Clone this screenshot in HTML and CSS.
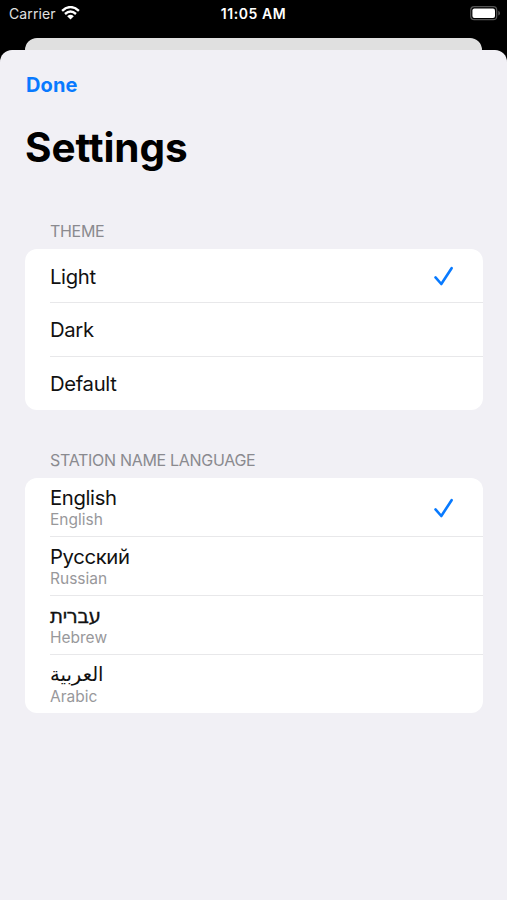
FILE: index.html
```html
<!DOCTYPE html>
<html lang="en">
<head>
<meta charset="utf-8">
<title>Settings</title>
<link rel="stylesheet" href="styles.css">
</head>
<body>
<header class="status">
  <div class="carrier"><span>Carrier</span>
    <svg class="wifi" width="19" height="14" viewBox="0 0 19 14"><path d="M1.1 4.9Q9.5-2.7 17.9 4.9M4 8Q9.5 3.1 15 8" fill="none" stroke="#fff" stroke-width="2.4"/><path d="M6.2 10.2Q9.5 7.3 12.8 10.2L9.5 13.5Z" fill="#fff"/></svg>
  </div>
  <div class="time">11:05 AM</div>
  <svg class="battery" width="31" height="15" viewBox="0 0 31 15"><rect x=".7" y=".7" width="26" height="13" rx="3.5" fill="none" stroke="#555" stroke-width="1.2"/><rect x="2.4" y="2.4" width="22.6" height="9.6" rx="2" fill="#fff"/><path d="M28.3 4.8Q30 5.6 30 7.2T28.3 9.6Z" fill="#555"/></svg>
</header>
<div class="behind"></div>
<main class="sheet">
  <a class="done">Done</a>
  <h1>Settings</h1>
  <section class="theme">
    <h2>THEME</h2>
    <ul class="card">
      <li><span class="name">Light</span><svg class="check" width="20" height="20" viewBox="0 0 20 20"><path d="M1.5 11.4L7.3 18L17.6 2.2"/></svg></li>
      <li><span class="name">Dark</span></li>
      <li><span class="name">Default</span></li>
    </ul>
  </section>
  <section class="language">
    <h2>STATION NAME LANGUAGE</h2>
    <ul class="card">
      <li><div><div class="name">English</div><div class="sub">English</div></div><svg class="check" width="20" height="20" viewBox="0 0 20 20"><path d="M1.5 11.4L7.3 18L17.6 2.2"/></svg></li>
      <li><div><div class="name" lang="ru">Русский</div><div class="sub">Russian</div></div></li>
      <li><div><div class="name hebrew" lang="he">עברית</div><div class="sub">Hebrew</div></div></li>
      <li><div><div class="name arabic" lang="ar">العربية</div><div class="sub">Arabic</div></div></li>
    </ul>
  </section>
</main>
</body>
</html>
```
FILE: styles.css
```css
* { box-sizing: border-box; }
body { margin: 0; height: 900px; overflow: hidden; background: #000; font-family: Inter, "Liberation Sans", sans-serif; display: flex; flex-direction: column; }
.status { height: 38px; flex: none; display: grid; grid-template-columns: 1fr auto 1fr; align-items: start; padding: 6px 6px 0 9px; color: #fff; }
.carrier { display: flex; gap: 5px; font-size: 14px; line-height: 16px; letter-spacing: .1px; color: #e0e0e0; }
.time { font-size: 14px; line-height: 16px; font-weight: 600; letter-spacing: .55px; margin-left: -3px; }
.battery { justify-self: end; }
.behind { height: 12px; flex: none; margin: 0 25px; background: #e0e0e0; border-radius: 12px 12px 0 0; }
.sheet { flex: 1; background: #f1f0f5; border-radius: 12px 12px 0 0; padding: 22px 24px 0 25px; }
.done { display: block; padding-left: 1px; font-size: 20px; line-height: 26px; font-weight: 650; letter-spacing: .1px; color: #087aff; }
h1 { margin: 25px 0 0; font-size: 40.5px; line-height: 50px; font-weight: 700; letter-spacing: -.1px; }
h2 { margin: 0; padding-left: 25px; font-size: 16px; line-height: 20px; font-weight: 400; letter-spacing: -.3px; color: #8a8a8f; }
.theme { margin-top: 49px; }
.language { margin-top: 41px; }
.theme h2, .language h2 { line-height: 18px; padding-bottom: 2px; }
.card { list-style: none; margin: 7px 0 0; padding: 0 0 0 25px; background: #fff; border-radius: 12px; }
li { display: flex; align-items: center; justify-content: space-between; padding: 1px 29px 0 0; height: 59px; }
li + li { border-top: 1px solid #e8e8ea; padding-top: 0; }
.language li:first-child { height: 58px; }
.theme li { height: 54px; }
.theme li:first-child { height: 53px; }
.name { font-size: 20.3px; line-height: 24px; letter-spacing: -.35px; color: #111; }
.sub { font-size: 15.5px; line-height: 19px; color: #98989b; }
.theme .name { padding-top: 1px; }
.hebrew { font-family: "DejaVu Sans", sans-serif; font-size: 20px; letter-spacing: -.5px; -webkit-text-stroke: .3px #111; }
.arabic { font-family: "DejaVu Sans", sans-serif; font-size: 19.6px; letter-spacing: 0; }
.check { fill: none; stroke: #087aff; stroke-width: 2.6; stroke-linecap: round; stroke-linejoin: round; }
```
